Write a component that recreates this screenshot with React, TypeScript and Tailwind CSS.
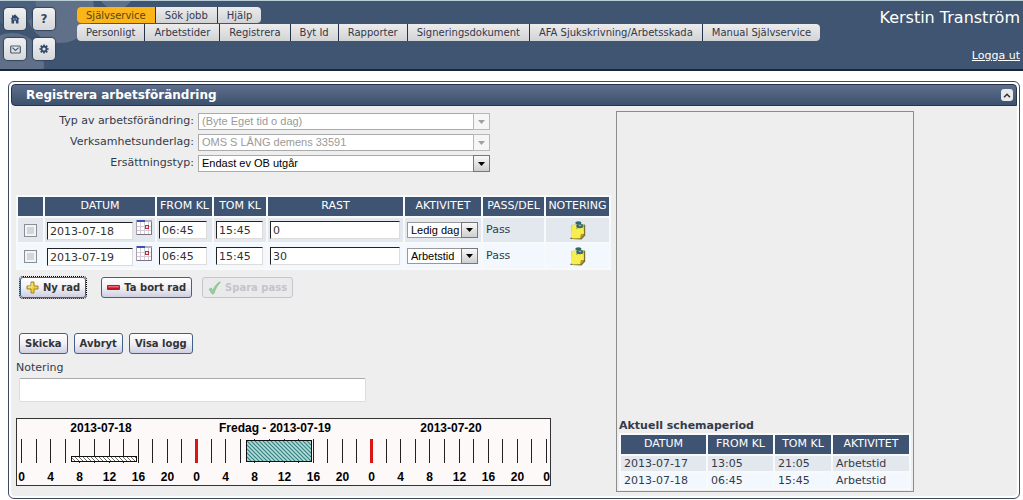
import { useState } from 'react';
import type { ReactNode } from 'react';

interface PassRow {
  id: number;
  datum: string;
  from: string;
  tom: string;
  rast: string;
  aktivitet: string;
}

const mainTabs = ['Självservice', 'Sök jobb', 'Hjälp'];

const subTabs = [
  'Personligt',
  'Arbetstider',
  'Registrera',
  'Byt Id',
  'Rapporter',
  'Signeringsdokument',
  'AFA Sjukskrivning/Arbetsskada',
  'Manual Självservice',
];

const initialRows: PassRow[] = [
  { id: 1, datum: '2013-07-18', from: '06:45', tom: '15:45', rast: '0', aktivitet: 'Ledig dag' },
  { id: 2, datum: '2013-07-19', from: '06:45', tom: '15:45', rast: '30', aktivitet: 'Arbetstid' },
];

const schedule = [
  ['2013-07-17', '13:05', '21:05', 'Arbetstid'],
  ['2013-07-18', '06:45', '15:45', 'Arbetstid'],
];

const cellInput =
  'block h-[18px] rounded-none border border-[#dcdcdc] border-t-[#222] border-l-[#222] bg-white px-0.5 text-[11px] text-[#333] outline-none';

function HomeIcon() {
  return (
    <svg viewBox="0 0 10 10" className="h-2.5 w-2.5">
      <path d="M5 .3 9.6 5H8.5v4.6H5.9V6.8H4.1v2.8H1.5V5H.4L2 3.4V1.2h1.3v.9z" fill="#34496a" />
      <path d="M3.2 4.6h1.2v1H3.2zM5.6 4.6h1.2v1H5.6z" fill="#dfe3e8" />
    </svg>
  );
}

function MailIcon() {
  return (
    <svg viewBox="0 0 11 9" className="h-[9px] w-[11px]" fill="none" stroke="#4a5c76">
      <rect x=".7" y="1" width="9.6" height="7" rx="1" strokeWidth="1.2" />
      <path d="m2.4 2.600 3.100 2.900L8.600 2.600" strokeWidth="1.2" />
    </svg>
  );
}

function GearIcon() {
  return (
    <svg viewBox="0 0 10 10" className="h-2.5 w-2.5" fill="none" stroke="#34496a">
      <circle cx="5" cy="5" r="2.5" strokeWidth="1.8" />
      <path d="M5 .4v1.900M5 7.7v1.900M.4 5h1.900M7.7 5h1.900M1.700 1.700l1.400 1.400M6.9 6.9l1.400 1.400M8.300 1.700 6.9 3.1M3.1 6.9 1.700 8.300" strokeWidth="1.7" />
    </svg>
  );
}

function CalendarIcon() {
  return (
    <svg viewBox="0 0 16 15" className="h-[15px] w-4">
      <rect x=".5" y=".5" width="15" height="14" fill="#fff" stroke="#a9a2ae" />
      <path d="M4.5 2v12M8.5 2v12M12.5 2v12M1 6.5h14M1 10.5h14" stroke="#d3cbd6" />
      <path d="M1 0h8v2H1z" fill="#3a50b4" />
      <path d="M9 0h6v2H9z" fill="#b5aec4" />
      <rect x="9.5" y="5.5" width="3" height="3" fill="#fbe3df" stroke="#b8323c" />
      <path d="M15.5 2v12.5H1" fill="none" stroke="#7d7380" />
    </svg>
  );
}

function NoteIcon() {
  return (
    <svg viewBox="0 0 16 19" className="h-[19px] w-4">
      <path d="M1.500 4 14 3l1.200 1.500v10l-3.700 4L2 18z" fill="#7d6f30" />
      <path d="M1.500 4 13.700 3l.3 10.500-3.200 3.800-9.300.2z" fill="#f6ee50" />
      <path d="M14 13.200 10.800 17.300l.2-3.600z" fill="#c9b93c" stroke="#7d6c20" strokeWidth=".6" />
      <path d="M.4 17.300h1.800" stroke="#444" />
      <path d="m8.500 5.500-1.800 2.200" stroke="#555" />
      <ellipse cx="9.800" cy="5" rx="3.600" ry="2.200" fill="#396a6e" />
      <path d="M7.600 2h3l.9 2.600H8.400z" fill="#4f8588" />
      <ellipse cx="8.400" cy="1.700" rx="3" ry="1.500" fill="#35666b" />
      <path d="M9 4.600h2.200" stroke="#9cc6c4" strokeWidth=".9" />
    </svg>
  );
}

function PlusIcon() {
  return (
    <svg viewBox="0 0 13 13" className="h-[13px] w-[13px]">
      <path d="M5 1h3v4h4v3H8v4H5V8H1V5h4z" fill="#f4cf2d" stroke="#9a8430" strokeLinejoin="round" />
      <path d="M6 2v4H2" fill="none" stroke="#fdf0a0" />
    </svg>
  );
}

function MinusIcon() {
  return (
    <svg viewBox="0 0 13 5" className="h-[5px] w-[13px]">
      <rect width="13" height="5" rx="1" fill="#c4141f" />
      <rect x="1" y="1" width="11" height="1.5" fill="#ee6670" />
    </svg>
  );
}

function CheckIcon() {
  return (
    <svg viewBox="0 0 13 14" className="h-3.5 w-[13px]">
      <path d="M1 8.2 3.2 7l1.6 2.4C6.4 5.6 8.4 2.9 11.8.8l.5.6C9.2 4.5 7.3 8.4 5.7 13H4.2z" fill="#93cf9b" stroke="#7dba87" strokeWidth=".6" />
    </svg>
  );
}

function Arrow({ disabled }: { disabled?: boolean }) {
  return (
    <span
      className={`pointer-events-none absolute inset-y-0 right-0 flex w-[17px] items-center justify-center border ${
        disabled ? 'border-[#b8b8b8] bg-[#f6f6f6]' : 'border-[#777] bg-linear-to-b from-[#f8f8f8] to-[#cfcfcf]'
      }`}
    >
      <svg viewBox="0 0 7 4" className="h-1 w-[7px]">
        <path d="M0 0h7L3.5 4z" fill={disabled ? '#a0a0a0' : '#000'} />
      </svg>
    </span>
  );
}

function SelectField({ id, label, value, disabled }: { id: string; label: string; value: string; disabled?: boolean }) {
  return (
    <>
      <label htmlFor={id} className="text-right leading-4">
        {label}
      </label>
      <div className="relative">
        <select
          id={id}
          disabled={disabled}
          className={`block h-[17px] w-full appearance-none rounded-none border border-[#aaa] bg-white pl-[3px] font-['Liberation_Sans',sans-serif] text-[11px] leading-[15px] opacity-100 ${
            disabled ? 'text-[#9a9a9a]' : 'text-black'
          }`}
        >
          <option>{value}</option>
        </select>
        <Arrow disabled={disabled} />
      </div>
    </>
  );
}

function ActionButton({ children, disabled, focused }: { children: ReactNode; disabled?: boolean; focused?: boolean }) {
  return (
    <button
      type="button"
      disabled={disabled}
      className={`flex h-[21px] items-center gap-1 rounded-[3px] border px-[5px] text-[10px] font-bold ${
        disabled
          ? 'border-[#c3c6cc] bg-[#eaeaec] text-[#c4c4c8]'
          : 'border-[#42608a] bg-linear-to-b from-white via-[#f0f0f6] to-[#cfcfe2] text-[#333]'
      } ${focused ? 'outline-1 outline-dotted outline-black' : ''}`}
    >
      {children}
    </button>
  );
}

function HeadCell({ children, className = '' }: { children?: ReactNode; className?: string }) {
  return <th className={`h-[19px] bg-[#3f5472] p-0 font-normal text-white ${className}`}>{children}</th>;
}

// Three days, one tick every second hour
function Timeline() {
  const step = 175 / 12;
  const ticks = Array.from({ length: 37 }, (_, i) => i);

  return (
    <svg viewBox="0 0 535 68" className="mt-4 block h-[68px] w-[535px]" fontFamily="'Liberation Sans', sans-serif" fontSize="12" fontWeight="bold" textAnchor="middle">
      <defs>
        <pattern id="hatch" width="4" height="4" patternUnits="userSpaceOnUse">
          <rect width="4" height="4" fill="#fff" />
          <path d="M-1-1 5 5M3-1l2 2M-1 3l2 2" stroke="#444" strokeWidth=".8" />
        </pattern>
        <pattern id="hatch-teal" width="4" height="4" patternUnits="userSpaceOnUse">
          <rect width="4" height="4" fill="#b4dcd9" />
          <path d="M-1-1 5 5M3-1l2 2M-1 3l2 2" stroke="#35807f" strokeWidth="1.2" />
        </pattern>
      </defs>
      <rect x=".5" y=".5" width="534" height="67" fill="#fdf9f9" stroke="#333" />
      <text x="85" y="14">2013-07-18</text>
      <text x="259" y="14">Fredag - 2013-07-19</text>
      <text x="435" y="14">2013-07-20</text>
      {ticks.map((i) => {
        const x = Math.round(5 + i * step) + 0.5;
        const midnight = i === 12 || i === 24;
        return (
          <path key={i} d={`M${x} 21V45`} stroke={midnight ? '#dc1414' : '#222'} strokeWidth={midnight ? 3 : 1} />
        );
      })}
      {ticks
        .filter((i) => i % 2 === 0)
        .map((i) => (
          <text key={i} x={Math.round(5 + i * step) + 0.5} y="63">
            {(i * 2) % 24}
          </text>
        ))}
      <rect x="55.5" y="38.5" width="65" height="5" fill="url(#hatch)" stroke="#111" />
      <rect x="230.5" y="22.5" width="65" height="21" fill="url(#hatch-teal)" stroke="#111" />
    </svg>
  );
}

function Header() {
  const tools = [
    { label: 'Hem', icon: <HomeIcon /> },
    { label: 'Frågor', icon: <span className="text-[12px] font-bold text-[#34496a]">?</span> },
    { label: 'Meddelanden', icon: <MailIcon /> },
    { label: 'Inställningar', icon: <GearIcon /> },
  ];

  return (
    <header className="relative flex items-start border-t border-b-2 border-t-[#b9cdd6] border-b-[#1b2738] bg-[#3f5572] pt-[7px] pr-[3px] pb-[5px] pl-1">
      <svg viewBox="0 0 140 68" className="absolute top-0 left-0 h-[68px] w-[140px]">
        <circle cx="60" cy="8" r="34" fill="#5f7088" />
        <circle cx="12" cy="64" r="32" fill="#5f7088" />
        <circle cx="14" cy="4" r="22" fill="#4b607c" />
        <circle cx="116" cy="-10" r="18" fill="#5f7088" />
      </svg>
      <div className="relative grid grid-cols-2 gap-x-[7px] gap-y-2">
        {tools.map((tool) => (
          <button
            key={tool.label}
            type="button"
            aria-label={tool.label}
            className="flex h-[22px] w-[22px] items-center justify-center rounded-[4px] bg-linear-to-b from-[#f1f1f1] to-[#d5d7da] shadow-[0_0_1px_1px_#34455e]"
          >
            {tool.icon}
          </button>
        ))}
      </div>

      <nav className="relative ml-[22px] -mt-px flex flex-col items-start gap-px text-[10px] text-[#33384a]">
        <div className="flex gap-px overflow-hidden rounded-[4px] bg-[#26344a]">
          {mainTabs.map((tab, i) => (
            <button
              key={tab}
              type="button"
              className={`h-4 px-[9px] ${i === 0 ? 'bg-[#fbb517] text-[#5b4410]' : 'bg-linear-to-b from-[#ececec] to-[#d2d3d5]'}`}
            >
              {tab}
            </button>
          ))}
        </div>
        <div className="flex gap-px overflow-hidden rounded-[4px] bg-[#26344a]">
          {subTabs.map((tab) => (
            <button key={tab} type="button" className="h-[17px] bg-linear-to-b from-[#ececec] to-[#d2d3d5] px-[9px] whitespace-nowrap">
              {tab}
            </button>
          ))}
        </div>
      </nav>

      <div className="relative ml-auto flex flex-col items-end gap-5 whitespace-nowrap text-white">
        <span className="text-[16px] leading-5">Kerstin Tranström</span>
        <a href="#logout" className="text-[11px] leading-4 underline">
          Logga ut
        </a>
      </div>
    </header>
  );
}

export default function App() {
  const [rows, setRows] = useState(initialRows);

  const update = (id: number, key: keyof PassRow, value: string) => {
    setRows(rows.map((row) => (row.id === id ? { ...row, [key]: value } : row)));
  };

  return (
    <div className="bg-white font-['DejaVu_Sans',sans-serif] text-[11px] text-[#333b4a]">
      <Header />

      <main className="pt-2.5 pr-[3px] pb-0.5 pl-2">
        <section className="rounded-[6px] border border-[#3c4c60] bg-white p-0.5">
          <div className="flex h-[22px] items-center justify-between rounded-[4px] rounded-br-none border border-[#26344a] bg-linear-to-b from-[#5f6e8e] to-[#3b516c] pr-[3px] pl-[14px]">
            <h1 className="text-[12px] font-bold text-white">Registrera arbetsförändring</h1>
            <button type="button" aria-label="Fäll ihop" className="flex h-3 w-3 items-center justify-center rounded-[3px] bg-[#e8eaed]">
              <svg viewBox="0 0 8 5" className="h-[5px] w-2" fill="none" stroke="#333" strokeWidth="1.5">
                <path d="M1 4.2l3-3 3 3" />
              </svg>
            </button>
          </div>

          <div className="flex rounded-b-[4px] bg-[#eee] px-[5px] pt-[5px] pb-1">
            {/* Form */}
            <form className="w-[600px] shrink-0 pt-0.5 pb-1.5">
              <div className="grid grid-cols-[178px_292px] gap-1">
                <SelectField id="typ" label="Typ av arbetsförändring:" value="(Byte Eget tid o dag)" disabled />
                <SelectField id="underlag" label="Verksamhetsunderlag:" value="OMS S LÅNG demens 33591" disabled />
                <SelectField id="ersattning" label="Ersättningstyp:" value="Endast ev OB utgår" />
              </div>

              <table className="mt-[23px] w-[595px] table-fixed border-separate border-spacing-[2px] bg-[#f8f9fa]">
                <thead>
                  <tr>
                    <HeadCell className="w-[25px]" />
                    <HeadCell className="w-[110px]">DATUM</HeadCell>
                    <HeadCell className="w-[55px]">FROM KL</HeadCell>
                    <HeadCell className="w-[52px]">TOM KL</HeadCell>
                    <HeadCell className="w-[135px]">RAST</HeadCell>
                    <HeadCell className="w-[76px]">AKTIVITET</HeadCell>
                    <HeadCell className="w-[61px]">PASS/DEL</HeadCell>
                    <HeadCell className="w-[63px]">NOTERING</HeadCell>
                  </tr>
                </thead>
                <tbody>
                  {rows.map((row) => (
                    <tr key={row.id} className="odd:bg-[#e3e8ee] even:bg-[#f2f8fe]">
                      <td className="h-6 p-0">
                        <input
                          type="checkbox"
                          aria-label={`Välj ${row.datum}`}
                          className="mx-auto block h-[13px] w-[13px] appearance-none border border-[#8a8f96] bg-[#d3d7db] shadow-[inset_0_0_0_2px_#f4f4f4]"
                        />
                      </td>
                      <td className="p-0">
                        <div className="flex items-start gap-[3px] pl-0.5">
                          <input aria-label="Datum" className={`${cellInput} mt-0.5 w-[86px]`} value={row.datum} onChange={(e) => update(row.id, 'datum', e.target.value)} />
                          <button type="button" aria-label="Välj datum">
                            <CalendarIcon />
                          </button>
                        </div>
                      </td>
                      <td className="p-0 pl-0.5">
                        <input aria-label="Från klockan" className={`${cellInput} w-12`} value={row.from} onChange={(e) => update(row.id, 'from', e.target.value)} />
                      </td>
                      <td className="p-0 pl-0.5">
                        <input aria-label="Till klockan" className={`${cellInput} w-[47px]`} value={row.tom} onChange={(e) => update(row.id, 'tom', e.target.value)} />
                      </td>
                      <td className="p-0 pl-0.5">
                        <input aria-label="Rast" className={`${cellInput} w-[130px]`} value={row.rast} onChange={(e) => update(row.id, 'rast', e.target.value)} />
                      </td>
                      <td className="p-0 pl-0.5">
                        <div className="relative w-[71px]">
                          <select
                            aria-label="Aktivitet"
                            value={row.aktivitet}
                            onChange={(e) => update(row.id, 'aktivitet', e.target.value)}
                            className="block h-4 w-full appearance-none rounded-none border border-[#999] bg-white pl-[3px] font-['Liberation_Sans',sans-serif] text-[11px] leading-[14px] text-black"
                          >
                            <option>Ledig dag</option>
                            <option>Arbetstid</option>
                          </select>
                          <Arrow />
                        </div>
                      </td>
                      <td className="p-0 pl-[3px]">Pass</td>
                      <td className="p-0">
                        <button type="button" aria-label="Notering" className="mx-auto block">
                          <NoteIcon />
                        </button>
                      </td>
                    </tr>
                  ))}
                </tbody>
              </table>

              <div className="mt-[7px] flex pl-1">
                <ActionButton focused>
                  <PlusIcon />
                  Ny rad
                </ActionButton>
                <div className="ml-[15px] flex gap-2.5">
                  <ActionButton>
                    <MinusIcon />
                    Ta bort rad
                  </ActionButton>
                  <ActionButton disabled>
                    <CheckIcon />
                    Spara pass
                  </ActionButton>
                </div>
              </div>

              <div className="mt-[35px] flex gap-1.5 pl-[3px]">
                <ActionButton>Skicka</ActionButton>
                <ActionButton>Avbryt</ActionButton>
                <ActionButton>Visa logg</ActionButton>
              </div>

              <label htmlFor="notering" className="mt-[7px] block leading-[14px]">
                Notering
              </label>
              <input
                id="notering"
                className="mt-[3px] ml-[3px] block h-6 w-[347px] rounded-[2px] border border-[#ddd] border-t-[#aaa] bg-white px-1 outline-none"
              />

              <Timeline />
            </form>

            {/* Current schedule */}
            <aside className="flex w-[298px] flex-col justify-end border border-[#8c8c8c] px-0.5 pb-px">
              <h2 className="leading-[14px] font-bold">Aktuell schemaperiod</h2>
              <table className="w-[292px] border-separate border-spacing-[2px] bg-[#f8f9fa]">
                <thead>
                  <tr>
                    <HeadCell className="w-[85px]">DATUM</HeadCell>
                    <HeadCell className="w-[65px]">FROM KL</HeadCell>
                    <HeadCell className="w-[56px]">TOM KL</HeadCell>
                    <HeadCell className="w-[76px]">AKTIVITET</HeadCell>
                  </tr>
                </thead>
                <tbody>
                  {schedule.map((cells) => (
                    <tr key={cells[0]} className="odd:bg-[#e3e8ee] even:bg-[#f2f8fe]">
                      {cells.map((cell) => (
                        <td key={cell} className="h-[15px] p-0 pl-[3px] leading-[15px]">
                          {cell}
                        </td>
                      ))}
                    </tr>
                  ))}
                </tbody>
              </table>
            </aside>
          </div>
        </section>
      </main>
    </div>
  );
}
